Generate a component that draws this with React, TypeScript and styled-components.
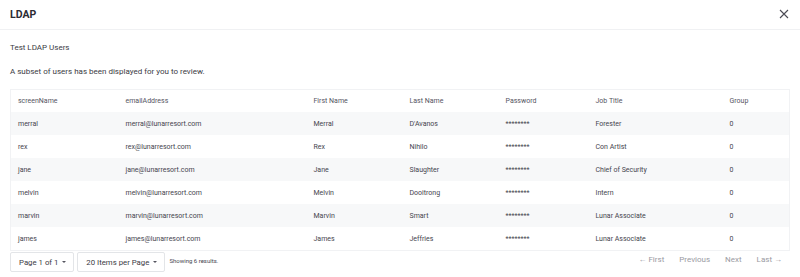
import styled, { createGlobalStyle } from "styled-components";

const GlobalStyle = createGlobalStyle`
  html, body {
    margin: 0;
    padding: 0;
    background: #ffffff;
    font-family: Roboto, "Liberation Sans", sans-serif;
  }
`;

interface IUser {
  screenName: string;
  email: string;
  firstName: string;
  lastName: string;
  jobTitle: string;
  group: string;
}

const users: IUser[] = [
  { screenName: "merral", email: "merral@lunarresort.com", firstName: "Merral", lastName: "D'Avanos", jobTitle: "Forester", group: "0" },
  { screenName: "rex", email: "rex@lunarresort.com", firstName: "Rex", lastName: "Nihilo", jobTitle: "Con Artist", group: "0" },
  { screenName: "jane", email: "jane@lunarresort.com", firstName: "Jane", lastName: "Slaughter", jobTitle: "Chief of Security", group: "0" },
  { screenName: "melvin", email: "melvin@lunarresort.com", firstName: "Melvin", lastName: "Dooitrong", jobTitle: "Intern", group: "0" },
  { screenName: "marvin", email: "marvin@lunarresort.com", firstName: "Marvin", lastName: "Smart", jobTitle: "Lunar Associate", group: "0" },
  { screenName: "james", email: "james@lunarresort.com", firstName: "James", lastName: "Jeffries", jobTitle: "Lunar Associate", group: "0" },
];

const columns = [
  { label: "screenName", width: 108 },
  { label: "emailAddress", width: 188 },
  { label: "First Name", width: 96 },
  { label: "Last Name", width: 96 },
  { label: "Password", width: 90 },
  { label: "Job Title", width: 134 },
  { label: "Group", width: 67 },
];

function App() {
  return (
    <>
      <GlobalStyle />
      <Modal>
        <Header>
          <Title>LDAP</Title>
          <CloseButton aria-label="close">
            <svg width="10" height="10" viewBox="0 0 10 10">
              <path d="M1 1 L9 9 M9 1 L1 9" stroke="#4b4b55" strokeWidth="1.1" fill="none" />
            </svg>
          </CloseButton>
        </Header>
        <Body>
          <Text>Test LDAP Users</Text>
          <Text>A subset of users has been displayed for you to review.</Text>
          <Table>
            <colgroup>
              {columns.map((c) => (
                <col key={c.label} style={{ width: c.width }} />
              ))}
            </colgroup>
            <thead>
              <tr>
                {columns.map((c) => (
                  <Th key={c.label}>{c.label}</Th>
                ))}
              </tr>
            </thead>
            <tbody>
              {users.map((u, i) => (
                <Row key={u.screenName} striped={i % 2 === 0}>
                  <Td>{u.screenName}</Td>
                  <Td>{u.email}</Td>
                  <Td>{u.firstName}</Td>
                  <Td>{u.lastName}</Td>
                  <Td>********</Td>
                  <Td>{u.jobTitle}</Td>
                  <Td>{u.group}</Td>
                </Row>
              ))}
            </tbody>
          </Table>
          <Pagination>
            <Left>
              <PageButton>
                Page 1 of 1 <Caret />
              </PageButton>
              <PageButton>
                20 Items per Page <Caret />
              </PageButton>
              <Results>Showing 6 results.</Results>
            </Left>
            <Nav>
              <NavLink>&larr; First</NavLink>
              <NavLink>Previous</NavLink>
              <NavLink>Next</NavLink>
              <NavLink>Last &rarr;</NavLink>
            </Nav>
          </Pagination>
        </Body>
      </Modal>
    </>
  );
}

const Modal = styled.div`
  width: 800px;
  height: 277px;
  background: #fff;
  overflow: hidden;
`;

const Header = styled.header`
  height: 30px;
  box-sizing: border-box;
  border-bottom: 1px solid #f0f1f3;
  display: flex;
  align-items: center;
  justify-content: space-between;
  padding: 0 11px 1px 10px;
`;

const Title = styled.h1`
  margin: 0;
  font-size: 10.5px;
  font-weight: 700;
  color: #2c2c33;
`;

const CloseButton = styled.button`
  border: 0;
  background: none;
  padding: 0;
  display: flex;
  width: 10px;
  height: 10px;
`;

const Body = styled.div`
  padding: 12px 11px 0 10px;
`;

const Text = styled.p`
  margin: 0 0 12px;
  font-size: 8px;
  line-height: 12px;
  color: #3b3b44;
`;

const Table = styled.table`
  width: 779px;
  border-collapse: collapse;
  table-layout: fixed;
  margin-top: -1px;
  border: 1px solid #f1f2f4;
`;

const Th = styled.th`
  height: 22px;
  padding: 0 7px;
  text-align: left;
  font-weight: 400;
  font-size: 7px;
  color: #55555f;
`;

const Row = styled.tr<{ striped: boolean }>`
  background: ${(p) => (p.striped ? "#f7f8f9" : "#ffffff")};
`;

const Td = styled.td`
  height: 23px;
  padding: 0 7px;
  font-size: 7px;
  color: #45454e;
  white-space: nowrap;
`;

const Pagination = styled.div`
  display: flex;
  justify-content: space-between;
  align-items: center;
  padding-top: 1px;
`;

const Left = styled.div`
  display: flex;
  align-items: center;
  gap: 3px;
`;

const PageButton = styled.button`
  height: 20px;
  box-sizing: border-box;
  border: 1px solid #e3e5e8;
  border-radius: 2px;
  background: #fff;
  padding: 0 7px 0 8px;
  font-family: Roboto, "Liberation Sans", sans-serif;
  font-size: 7.8px;
  color: #3b3b44;
  display: flex;
  align-items: center;
  gap: 4px;
`;

const Caret = styled.span`
  width: 0;
  height: 0;
  border-left: 2px solid transparent;
  border-right: 2px solid transparent;
  border-top: 2px solid #55555f;
`;

const Results = styled.span`
  font-size: 6px;
  color: #45454e;
  margin-left: 1px;
  margin-top: -4px;
`;

const Nav = styled.nav`
  display: flex;
  gap: 15px;
  padding-right: 7px;
  margin-top: -6px;
`;

const NavLink = styled.span`
  font-size: 8px;
  color: #9a9aa2;
`;

export default App;
